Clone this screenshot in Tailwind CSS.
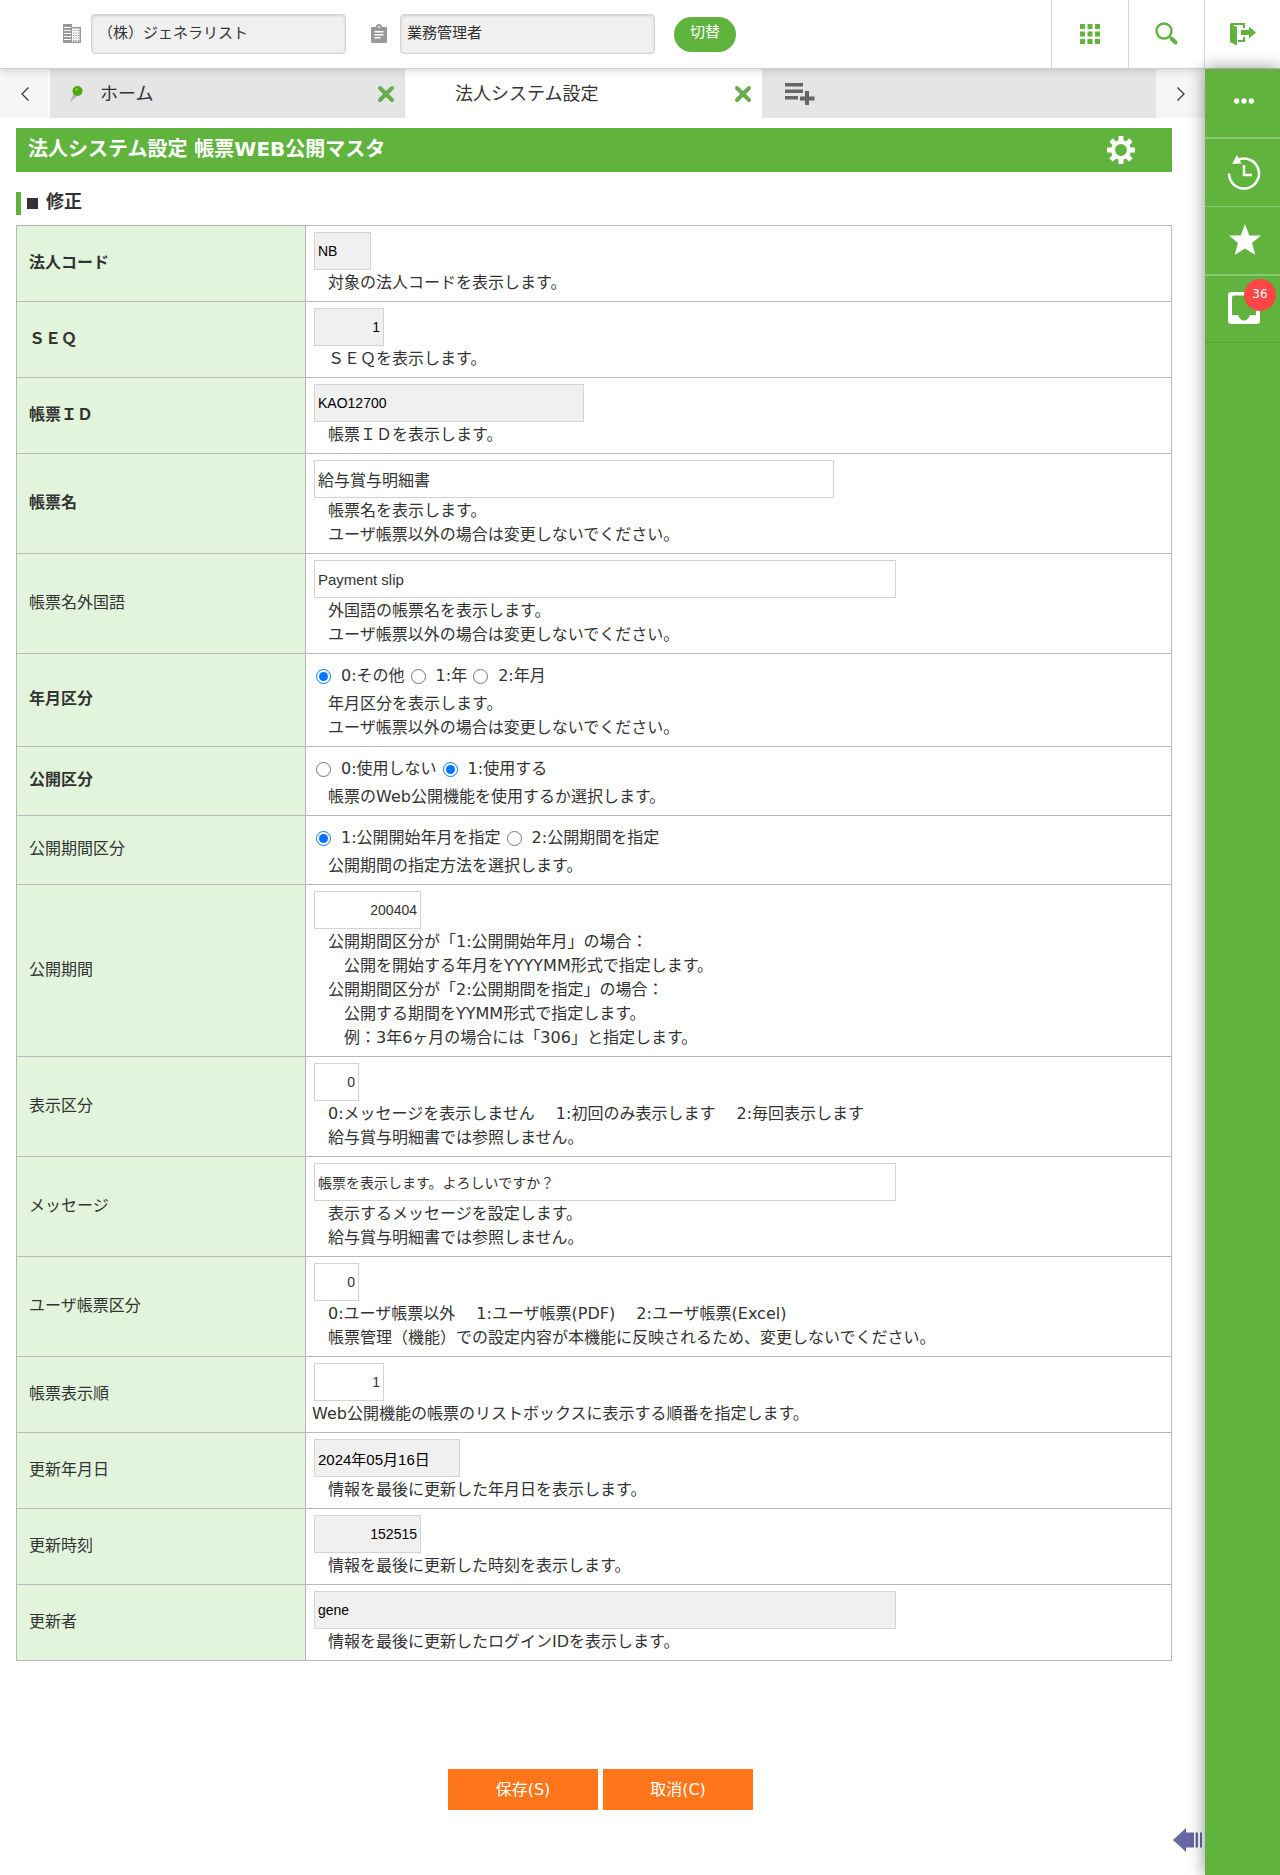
<!DOCTYPE html>
<html lang="ja">
<head>
  <meta charset="UTF-8">
  <meta name="viewport" content="width=device-width, initial-scale=1.0">
  <title>法人システム設定 帳票WEB公開マスタ</title>
  <script src="https://cdn.jsdelivr.net/npm/@tailwindcss/browser@4"></script>
</head>
<body class="flex flex-col min-h-screen bg-white text-[#333] text-base leading-6 font-['DejaVu_Sans','Noto_Sans_CJK_JP',sans-serif]">

  <!-- ヘッダー -->
  <header class="relative flex items-stretch h-[69px] bg-white border-b border-[#cfcfcf] shadow-[0_2px_8px_rgba(0,0,0,0.15)]">
    <div class="flex flex-1 items-center pl-[62px]">
      <label for="company" aria-label="会社" class="mr-[9px]">
        <svg class="w-5 h-5" viewBox="0 0 20 20">
          <path fill="#999" d="M1 0h9v3h9v16H1z"/>
          <path stroke="#fff" stroke-width="1" d="M2 3.500h7M2 6.500h7M2 9.500h7M2 12.500h7M2 15.500h7"/>
          <path fill="#fff" d="M10 4.500h7.500v13H10z"/>
          <path stroke="#999" stroke-width="1.200" stroke-dasharray="1.500 1" d="M11 6.500h6M11 9h6M11 11.500h6M11 14h6M11 16.500h6"/>
        </svg>
      </label>
      <input id="company" type="text" readonly value="（株）ジェネラリスト" class="w-[255px] h-10 px-1.5 pb-1.5 text-[15px] bg-[#f0f0f0] border border-[#d3d3d3] rounded shadow-[inset_0_1px_3px_rgba(0,0,0,0.12)]">
      <label for="role" aria-label="担当" class="ml-6 mr-3">
        <svg class="w-[18px] h-5" viewBox="0 0 18 20">
          <path fill="#999" fill-rule="evenodd" d="M2 3h4a3 3 0 0 1 6 0h4a1 1 0 0 1 1 1v14a1 1 0 0 1-1 1H2a1 1 0 0 1-1-1V4a1 1 0 0 1 1-1zM9 2a1 1 0 1 0 0 2 1 1 0 0 0 0-2zM4.500 7v1.500h9V7zM4.500 10v1.500h9V10zM4.500 13v1.500h6V13z"/>
        </svg>
      </label>
      <input id="role" type="text" readonly value="業務管理者" class="w-[255px] h-10 px-1.5 pb-1.5 text-[15px] bg-[#f0f0f0] border border-[#d3d3d3] rounded shadow-[inset_0_1px_3px_rgba(0,0,0,0.12)]">
      <button class="w-[62px] h-[35px] ml-[19px] pb-1 text-[15px] text-white bg-[#60b33d] rounded-full">切替</button>
    </div>
    <button aria-label="メニュー" class="flex items-center justify-center w-[77px] border-l border-[#d5d5d5]">
      <svg class="w-5 h-5" viewBox="0 0 20 20" fill="#60b33d"><path d="M0 0h5v5H0zM7.500 0h5v5h-5zM15 0h5v5h-5zM0 7.500h5v5H0zM7.500 7.500h5v5h-5zM15 7.500h5v5h-5zM0 15h5v5H0zM7.500 15h5v5h-5zM15 15h5v5h-5z"/></svg>
    </button>
    <button aria-label="検索" class="flex items-center justify-center w-[76px] border-l border-[#d5d5d5]">
      <svg class="w-6 h-6" viewBox="0 0 24 24" fill="none" stroke="#60b33d"><circle cx="9" cy="9" r="7.500" stroke-width="2.400"/><path stroke-width="2.500" d="m14 14 3 3"/><path stroke-width="4" stroke-linecap="round" d="m17 17 3.500 3.500"/></svg>
    </button>
    <button aria-label="ログアウト" class="flex items-center justify-center w-[76px] border-l border-[#d5d5d5]">
      <svg class="w-7 h-6" viewBox="0 0 28 24">
        <path fill="none" stroke="#60b33d" stroke-width="2" d="M2 2h13v4M15 15v4H9"/>
        <path fill="#60b33d" d="M1 1.500 8 5v18.500L1 20zM12 8h8V4.500l7 6-7 6V13h-8z"/>
      </svg>
    </button>
  </header>

  <div class="flex flex-1">
    <div class="flex flex-col flex-1 min-w-0">

      <!-- タブ -->
      <nav class="flex h-[49px] bg-[#e5e5e5] text-lg">
        <button aria-label="前へ" class="flex items-center justify-center w-[50px] bg-[#f6f6f6] border-r border-white">
          <svg class="w-2 h-3.5" viewBox="0 0 8 14" fill="none" stroke="#333" stroke-width="1.200"><path d="M7.500.500 1 7l6.500 6.500"/></svg>
        </button>
        <div class="flex items-center w-[355px] pl-[18px] pr-2.5">
          <svg class="w-4 h-[18px]" viewBox="0 0 16 18">
            <path fill="#b5b5b5" d="m6 8 3 3-7.500 6.500z"/>
            <circle cx="9.500" cy="6" r="5" fill="#4fa70b"/>
            <circle cx="8.500" cy="4.500" r="1.500" fill="#7cc832"/>
          </svg>
          <a href="#" class="flex-1 ml-4">ホーム</a>
          <button aria-label="ホームを閉じる">
            <svg class="w-[18px] h-[18px]" viewBox="0 0 18 18" stroke="#68ac4b" stroke-width="4" stroke-linecap="round"><path d="m3 3 12 12M15 3 3 15"/></svg>
          </button>
        </div>
        <div class="flex items-center w-[357px] pl-[50px] pr-2.5 bg-white">
          <a href="#" class="flex-1">法人システム設定</a>
          <button aria-label="法人システム設定を閉じる">
            <svg class="w-[18px] h-[18px]" viewBox="0 0 18 18" stroke="#68ac4b" stroke-width="4" stroke-linecap="round"><path d="m3 3 12 12M15 3 3 15"/></svg>
          </button>
        </div>
        <button aria-label="タブを追加" class="ml-[23px]">
          <svg class="w-[30px] h-[22px]" viewBox="0 0 30 22" fill="#666"><path d="M0 0h18v3.500H0zM0 6.500h18V10H0zM0 13h13v3.500H0zM20 8h4v5.500h5.500v4H24V22h-4v-4.500h-5v-4h5z"/></svg>
        </button>
        <button aria-label="次へ" class="flex items-center justify-center w-[49px] ml-auto bg-[#f6f6f6]">
          <svg class="w-2 h-3.5" viewBox="0 0 8 14" fill="none" stroke="#333" stroke-width="1.200"><path d="M.500.500 7 7l-6.500 6.500"/></svg>
        </button>
      </nav>

      <main class="pl-4 pr-[33px] pt-2.5">
        <div class="flex items-center justify-between h-11 pl-3 pr-9 bg-[#60b33d] text-white">
          <h1 class="pb-0.5 text-xl font-bold">法人システム設定 帳票WEB公開マスタ</h1>
          <button aria-label="設定">
            <svg class="w-[30px] h-[30px]" viewBox="0 0 30 30" fill="none" stroke="#fff">
              <circle cx="15" cy="15" r="8" stroke-width="4"/>
              <path stroke-width="5" d="M15 1v5M15 24v5M1 15h5M24 15h5M5.100 5.100l3.500 3.500M21.400 21.400l3.500 3.500M5.100 24.900l3.500-3.500M21.400 8.600l3.500-3.500"/>
            </svg>
          </button>
        </div>

        <h2 class="flex items-center gap-2 h-[23px] mt-5 mb-2.5 pl-1.5 border-l-5 border-[#60b33d] text-lg font-bold">
          <span class="w-[11px] h-[11px] bg-[#333]"></span>
          <span class="pb-1">修正</span>
        </h2>

        <table class="w-full table-fixed border-collapse [&_td]:border [&_td]:border-[#b8b8b8] [&_td]:px-1.5 [&_td]:py-1.5 [&_th]:border [&_th]:border-[#b8b8b8] [&_th]:w-[289px] [&_th]:px-3 [&_th]:pb-0.5 [&_th]:text-left [&_th]:bg-[#e2f5dc] [&_p]:pl-4 [&_td>input]:block [&_td>input]:h-[38px] [&_td>input]:ml-0.5 [&_td>input]:mb-px [&_td>input]:px-[3px] [&_td>input]:border [&_td>input]:border-[#d3d3d3] [&_td>input]:text-sm [&_td>input]:font-['Liberation_Sans','Noto_Sans_CJK_JP',sans-serif] [&_td>input:read-only]:bg-[#f0f0f0] [&_td>input:read-only]:text-black">
          <tbody>
            <tr>
              <th class="font-bold"><label for="corp">法人コード</label></th>
              <td>
                <input id="corp" type="text" readonly value="NB" class="w-[57px]">
                <p>対象の法人コードを表示します。</p>
              </td>
            </tr>
            <tr>
              <th class="font-bold"><label for="seq">ＳＥＱ</label></th>
              <td>
                <input id="seq" type="text" readonly value="1" class="w-[70px] text-right">
                <p>ＳＥＱを表示します。</p>
              </td>
            </tr>
            <tr>
              <th class="font-bold"><label for="formId">帳票ＩＤ</label></th>
              <td>
                <input id="formId" type="text" readonly value="KAO12700" class="w-[270px]">
                <p>帳票ＩＤを表示します。</p>
              </td>
            </tr>
            <tr>
              <th class="font-bold"><label for="formName">帳票名</label></th>
              <td>
                <input id="formName" type="text" value="給与賞与明細書" class="w-[520px] text-base!">
                <p>帳票名を表示します。<br>ユーザ帳票以外の場合は変更しないでください。</p>
              </td>
            </tr>
            <tr>
              <th class="font-normal"><label for="formNameEn">帳票名外国語</label></th>
              <td>
                <input id="formNameEn" type="text" value="Payment slip" class="w-[582px] text-[15px]!">
                <p>外国語の帳票名を表示します。<br>ユーザ帳票以外の場合は変更しないでください。</p>
              </td>
            </tr>
            <tr>
              <th class="font-bold">年月区分</th>
              <td>
                <div class="flex items-center gap-1.5 h-8 pl-1">
                  <label class="flex items-center gap-2.5"><input type="radio" name="ym" checked class="w-[15px] h-[15px]">0:その他</label>
                  <label class="flex items-center gap-2.5"><input type="radio" name="ym" class="w-[15px] h-[15px]">1:年</label>
                  <label class="flex items-center gap-2.5"><input type="radio" name="ym" class="w-[15px] h-[15px]">2:年月</label>
                </div>
                <p>年月区分を表示します。<br>ユーザ帳票以外の場合は変更しないでください。</p>
              </td>
            </tr>
            <tr>
              <th class="font-bold">公開区分</th>
              <td>
                <div class="flex items-center gap-1.5 h-8 pl-1">
                  <label class="flex items-center gap-2.5"><input type="radio" name="open" class="w-[15px] h-[15px]">0:使用しない</label>
                  <label class="flex items-center gap-2.5"><input type="radio" name="open" checked class="w-[15px] h-[15px]">1:使用する</label>
                </div>
                <p>帳票のWeb公開機能を使用するか選択します。</p>
              </td>
            </tr>
            <tr>
              <th class="font-normal">公開期間区分</th>
              <td>
                <div class="flex items-center gap-1.5 h-8 pl-1">
                  <label class="flex items-center gap-2.5"><input type="radio" name="term" checked class="w-[15px] h-[15px]">1:公開開始年月を指定</label>
                  <label class="flex items-center gap-2.5"><input type="radio" name="term" class="w-[15px] h-[15px]">2:公開期間を指定</label>
                </div>
                <p>公開期間の指定方法を選択します。</p>
              </td>
            </tr>
            <tr>
              <th class="font-normal"><label for="period">公開期間</label></th>
              <td>
                <input id="period" type="text" value="200404" class="w-[107px] text-right">
                <p>公開期間区分が「1:公開開始年月」の場合：<br>　公開を開始する年月をYYYYMM形式で指定します。<br>公開期間区分が「2:公開期間を指定」の場合：<br>　公開する期間をYYMM形式で指定します。<br>　例：3年6ヶ月の場合には「306」と指定します。</p>
              </td>
            </tr>
            <tr>
              <th class="font-normal"><label for="display">表示区分</label></th>
              <td>
                <input id="display" type="text" value="0" class="w-[45px] text-right">
                <p>0:メッセージを表示しません　 1:初回のみ表示します　 2:毎回表示します<br>給与賞与明細書では参照しません。</p>
              </td>
            </tr>
            <tr>
              <th class="font-normal"><label for="message">メッセージ</label></th>
              <td>
                <input id="message" type="text" value="帳票を表示します。よろしいですか？" class="w-[582px]">
                <p>表示するメッセージを設定します。<br>給与賞与明細書では参照しません。</p>
              </td>
            </tr>
            <tr>
              <th class="font-normal"><label for="userForm">ユーザ帳票区分</label></th>
              <td>
                <input id="userForm" type="text" value="0" class="w-[45px] text-right">
                <p>0:ユーザ帳票以外　 1:ユーザ帳票(PDF)　 2:ユーザ帳票(Excel)<br>帳票管理（機能）での設定内容が本機能に反映されるため、変更しないでください。</p>
              </td>
            </tr>
            <tr>
              <th class="font-normal"><label for="order">帳票表示順</label></th>
              <td>
                <input id="order" type="text" value="1" class="w-[70px] text-right">
                <div>Web公開機能の帳票のリストボックスに表示する順番を指定します。</div>
              </td>
            </tr>
            <tr>
              <th class="font-normal"><label for="updDate">更新年月日</label></th>
              <td>
                <input id="updDate" type="text" readonly value="2024年05月16日" class="w-[146px] text-[15px]!">
                <p>情報を最後に更新した年月日を表示します。</p>
              </td>
            </tr>
            <tr>
              <th class="font-normal"><label for="updTime">更新時刻</label></th>
              <td>
                <input id="updTime" type="text" readonly value="152515" class="w-[107px] text-right">
                <p>情報を最後に更新した時刻を表示します。</p>
              </td>
            </tr>
            <tr>
              <th class="font-normal"><label for="updUser">更新者</label></th>
              <td>
                <input id="updUser" type="text" readonly value="gene" class="w-[582px]">
                <p>情報を最後に更新したログインIDを表示します。</p>
              </td>
            </tr>
          </tbody>
        </table>
      </main>

      <div class="flex justify-center gap-[5px] mt-[108px] pr-1">
        <button class="w-[150px] h-[41px] text-white bg-[#ff7519]">保存(S)</button>
        <button class="w-[150px] h-[41px] text-white bg-[#ff7519]">取消(C)</button>
      </div>

      <div class="flex justify-end mt-[18px] mb-[22px] pr-0.5">
        <button aria-label="パネルを開く">
          <svg class="w-[30px] h-6" viewBox="0 0 30 24" fill="#6866a3"><path d="M0 12 13 0v4.500h8v15h-8V24zM22.500 4.500H25v15h-2.500zM27 4.500h2v15h-2z"/></svg>
        </button>
      </div>
    </div>

    <!-- サイドバー -->
    <aside class="relative flex flex-col w-[75px] bg-[#60b33d] shadow-[0_0_16px_rgba(0,0,0,0.45)]">
      <button aria-label="その他" class="flex items-center justify-center h-[70px] pl-0.5 pb-1 border-b-2 border-[#8cc973]">
        <svg class="w-5 h-1.5" viewBox="0 0 20 6" fill="#fff"><circle cx="2.700" cy="3" r="2.700"/><circle cx="10" cy="3" r="2.700"/><circle cx="17.300" cy="3" r="2.700"/></svg>
      </button>
      <button aria-label="履歴" class="flex items-center justify-center h-[68px] pl-0.5 border-b border-[#8cc973]">
        <svg class="w-9 h-9" viewBox="0 0 36 36" fill="none" stroke="#fff">
          <path stroke-width="2.500" d="M3 18.500a15 15 0 1 0 9-13.700"/>
          <path stroke-width="2.500" d="M18 10v10h8"/>
          <path fill="#fff" stroke="none" d="M11 0 6 9l9.500-.500z"/>
        </svg>
      </button>
      <button aria-label="お気に入り" class="flex items-center justify-center h-[69px] pl-1 pb-0.5 border-b-2 border-[#8cc973]">
        <svg class="w-8 h-8" viewBox="0 0 32 32" fill="#fff"><path d="m16 0 4.300 11.500H32l-9 7.500 3.300 12L16 24.500 5.700 31 9 19l-9-7.500h11.700z"/></svg>
      </button>
      <button aria-label="受信箱" class="relative flex items-center justify-center h-[67px] pl-0.5 pb-0.5 border-b border-[#55a036]">
        <svg class="w-8 h-8" viewBox="0 0 32 32"><path fill="#fff" fill-rule="evenodd" d="M3 0h26a3 3 0 0 1 3 3v26a3 3 0 0 1-3 3H3a3 3 0 0 1-3-3V3a3 3 0 0 1 3-3zM6 3.500a2 2 0 0 0-2 2V23h6q2 5.500 6 5.500t6-5.500h6V5.500a2 2 0 0 0-2-2z"/></svg>
        <span class="absolute top-[3px] right-1 flex items-center justify-center w-8 h-8 pb-0.5 text-xs text-white bg-[#ff4646] rounded-full">36</span>
      </button>
    </aside>
  </div>

</body>
</html>
